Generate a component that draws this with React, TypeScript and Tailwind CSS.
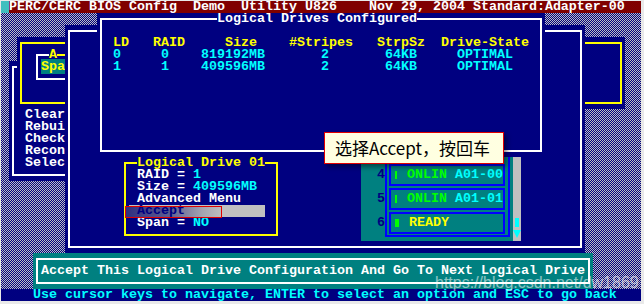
import type { ReactNode } from 'react'

// text-mode screen: 80x25 cells of 8x12 px
function Win({
  pos,
  line,
  bg = 'bg-[#000080]',
  children,
}: {
  pos: string
  line: string
  bg?: string
  children?: ReactNode
}) {
  return (
    <div className={`absolute ${pos} ${bg}`}>
      <div className={`absolute inset-x-[3px] inset-y-[5px] border-2 ${line}`} />
      <div className="relative flex flex-col items-start">{children}</div>
    </div>
  )
}

function Title({ className, children }: { className: string; children: ReactNode }) {
  return <span className={`inline-block h-[12px] align-top bg-[#000080] ${className}`}>{children}</span>
}

function DriveItem({ state, stateColor, slot }: { state: string; stateColor: string; slot?: string }) {
  return (
    <div className="h-[22px] w-[116px] border-2 border-[#0000ff] flex items-center">
      <div className="ml-[4px] w-[4px] h-[8px] bg-[#00ff00]" />
      <div className="ml-[10px]">
        <span className={stateColor}>{state}</span>
        {slot && <span className="text-[#00ffff]"> {slot}</span>}
      </div>
    </div>
  )
}

export default function App() {
  return (
    <div className="w-[644px] h-[304px] overflow-hidden bg-[#e9e9e9] pl-px pt-px">
      <div className="relative w-[640px] h-[300px] flex flex-col font-['Liberation_Mono',monospace] font-bold text-[13.333px] leading-[12px] whitespace-pre bg-[image:repeating-conic-gradient(#000080_0%_25%,#c0c0c0_0%_50%)] bg-[length:2px_2px]">
        <div className="flex h-[12px] bg-[#800000] text-white">
          <div className="w-[8px] bg-[#3fbfbf]" />
          <div>PERC/CERC BIOS Config  Demo  Utility U826    Nov 29, 2004 Standard:Adapter-00</div>
        </div>

        <div className="relative flex-1">
          {/* management menu, mostly hidden */}
          <Win pos="left-[8px] top-[48px] w-[160px] h-[120px]" line="border-white">
            <div className="pt-[48px] pl-[16px] text-white">
              <div>Clear</div>
              <div>Rebui</div>
              <div>Check</div>
              <div>Recon</div>
              <div>Selec</div>
            </div>
          </Win>

          <Win pos="left-[16px] top-[24px] w-[608px] h-[72px]" line="border-[#ffff00]" />

          <Win pos="left-[32px] top-[36px] w-[160px] h-[36px]" line="border-white">
            <div className="flex pl-[16px]">
              <Title className="text-[#ffff00]">A</Title>
              <div className="w-[8px] h-[12px] flex items-center">
                <div className="w-full h-[2px] bg-[#ffff00]" />
              </div>
            </div>
            <div className="pl-[8px]">
              <span className="bg-[#008080] text-[#ffff00]">Spa</span>
            </div>
          </Win>

          <Win pos="left-[64px] top-[12px] w-[520px] h-[228px]" line="border-white" />

          <Win pos="left-[96px] top-[0px] w-[448px] h-[144px]" line="border-white">
            <div className="pl-[120px] h-[12px]">
              <Title className="text-white">Logical Drives Configured</Title>
            </div>
            <div className="h-[12px]" />
            <div className="pl-[16px] text-[#ffff00]">LD   RAID     Size    #Stripes   StrpSz  Drive-State</div>
            <div className="pl-[16px] text-[#00ffff]">0     0    819192MB       2       64KB     OPTIMAL</div>
            <div className="pl-[16px] text-[#00ffff]">1     1    409596MB       2       64KB     OPTIMAL</div>
          </Win>

          <Win pos="left-[120px] top-[144px] w-[160px] h-[84px]" line="border-[#ffff00]">
            <div className="pl-[16px] h-[12px]">
              <Title className="text-[#ffff00]">Logical Drive 01</Title>
            </div>
            <div className="pl-[16px] text-white">
              RAID = <span className="text-[#00ffff]">1</span>
            </div>
            <div className="pl-[16px] text-white">
              Size = <span className="text-[#00ffff]">409596MB</span>
            </div>
            <div className="pl-[16px] text-white">Advanced Menu</div>
            <div className="relative ml-[8px] w-[136px] pl-[8px] bg-[#c0c0c0] text-[#000080]">
              <div className="absolute left-[-4px] top-[1px] w-[97px] h-[12px] bg-[linear-gradient(90deg,#2e2e80_0%,#5c5c92_45%,#a4a4b0_80%,#bdbdbd_100%)]" />
              <span className="relative">Accept</span>
              <div className="absolute left-[-4px] top-[1px] w-[97px] h-[12px] border border-[#e00000]" />
            </div>
            <div className="pl-[16px] text-white">
              Span = <span className="text-[#00ffff]">NO</span>
            </div>
          </Win>

          {/* physical drive list */}
          <div className="absolute left-[360px] top-[144px] w-[160px] h-[84px] bg-[#008080] flex">
            <div className="w-[24px] pl-[16px] pt-[12px] flex flex-col gap-[12px] text-[#000080]">
              <div>4</div>
              <div>5</div>
              <div>6</div>
            </div>
            <div className="w-[125px] h-[80px] border-x-2 border-b-2 border-[#0000ff] pl-[2px] pt-[7px] flex flex-col gap-[2px]">
              <DriveItem state="ONLIN" stateColor="text-[#00ff00]" slot="A01-00" />
              <DriveItem state="ONLIN" stateColor="text-[#00ff00]" slot="A01-01" />
              <DriveItem state="READY" stateColor="text-[#ffff00]" />
            </div>
            <div className="ml-[3px] w-[8px] h-full bg-[#c0c0c0] flex flex-col items-center pt-[61px]">
              <div className="w-[4px] h-[9px] bg-[#00ffff]" />
              <svg className="mt-[3px]" width="8" height="8" viewBox="0 0 8 8">
                <path d="M0 0H8L4 8Z" fill="#00ffff" />
              </svg>
            </div>
          </div>

          <Win pos="left-[32px] top-[240px] w-[560px] h-[36px]" line="border-white" bg="bg-[#008080]">
            <div className="h-[12px]" />
            <div className="pl-[8px] text-white">Accept This Logical Drive Configuration And Go To Next Logical Drive</div>
          </Win>

          {/* annotation callout */}
          <div className="absolute left-[323px] top-[119px] w-[180px] h-[32px] bg-[#ffffe1] border border-[#e00000] shadow-[3px_3px_5px_rgba(0,0,0,0.45)] flex items-center pl-[10px] font-['Noto_Sans_CJK_SC',sans-serif] font-normal text-[17px] leading-[20px] text-black">
            选择Accept，按回车
          </div>
        </div>

        <div className="h-[12px] bg-[#000080] text-[#00ffff] pl-[32px]">
          Use cursor keys to navigate, ENTER to select an option and ESC to go back
        </div>

        <div className="absolute left-[434px] top-[274px] font-['Liberation_Sans',sans-serif] font-normal text-[16px] leading-[16px] text-white/55">
          https://blog.csdn.net/dw1869
        </div>
      </div>
    </div>
  )
}
